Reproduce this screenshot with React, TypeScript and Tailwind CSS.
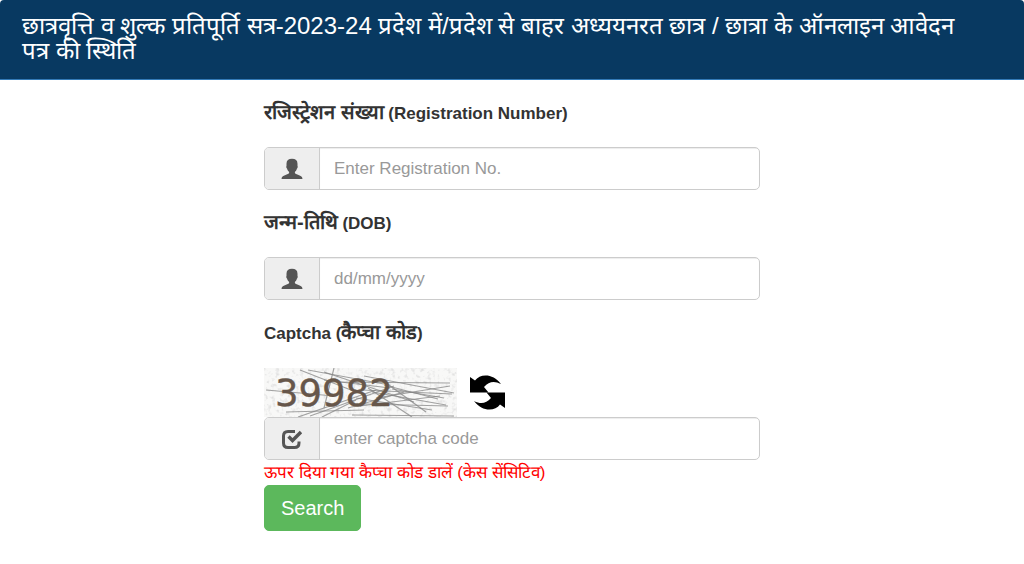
import type { ReactNode } from "react";

const captchaLines = [
  "M2 22L70 28", "M36 2L92 24", "M44 2L120 16", "M70 0L60 40", "M62 14L186 15",
  "M60 12L126 20", "M22 44L100 42", "M34 49L112 22", "M46 48L130 18", "M58 49L92 32",
  "M60 4L150 34", "M98 22L188 26", "M100 8L190 25", "M108 24L182 37", "M92 30L168 42",
  "M112 30L186 18", "M96 38L176 28", "M100 36L184 38", "M118 12L162 44", "M120 17L174 31",
  "M88 47L190 48", "M104 20L148 49", "M128 21L180 30", "M84 40L140 24",
];

function UserIcon() {
  return (
    <svg viewBox="0 0 22 22" className="size-[22px]" fill="#555" aria-hidden="true">
      <path d="M11 .8C7.400.8 5.500 2.600 5.500 5.800V8c-.5.5-.2 1.900.5 2.400.4 1.500 1.100 2.700 2.100 3.400v1.300c-.3.8-1.600 1.200-3 1.700C2.600 17.700.600 18.500.500 21h21c-.1-2.500-2.100-3.300-4.600-4.200-1.400-.5-2.700-.9-3-1.700v-1.300c1-.7 1.700-1.900 2.100-3.400.7-.5 1-1.900.5-2.400V5.800C16.500 2.600 14.600.8 11 .8z" />
    </svg>
  );
}

function CheckIcon() {
  return (
    <svg viewBox="0 0 22 22" className="size-[22px]" fill="none" stroke="#555" aria-hidden="true">
      <path d="M14 3.500H7Q2.500 3.500 2.500 8V15Q2.500 19.500 7 19.500H13.500Q18 19.500 18 15V13.500" strokeWidth="3" />
      <path d="M7.500 8.500L11.500 12.500L20 4" strokeWidth="3.400" />
    </svg>
  );
}

function Captcha() {
  return (
    <svg viewBox="0 0 193 49" className="h-[49px] w-[193px]" role="img" aria-label="39982">
      <defs>
        <filter id="grain" x="0" y="0" width="100%" height="100%">
          <feTurbulence type="fractalNoise" baseFrequency="0.25" numOctaves="2" seed="4" />
          <feColorMatrix values="0 0 0 0 .75  0 0 0 0 .75  0 0 0 0 .75  3 0 0 0 -1.500" />
        </filter>
      </defs>
      <rect width="193" height="49" fill="#f8f8f7" />
      <rect width="193" height="49" filter="url(#grain)" />
      {captchaLines.map((d) => (
        <path key={d} d={d} stroke="#858585" strokeWidth="1.200" opacity="0.750" />
      ))}
      <text x="11" y="38" fontFamily="'DejaVu Sans', sans-serif" fontSize="37" fill="#66564a" stroke="#66564a" strokeWidth="0.400">
        39982
      </text>
    </svg>
  );
}

function RefreshIcon() {
  return (
    <svg viewBox="0 0 35 35" className="size-[35px]" aria-hidden="true">
      <path d="M0 2L5 5.500C10-1.500 23-2 31 9C24 5.500 19 6.500 14 12L18.500 17.500H0z" />
      <path d="M35 33L30 29.500C25 36.500 12 37 4 26C11 29.500 16 28.500 21 23L16.500 17.500H35z" />
    </svg>
  );
}

function Field({ id, placeholder, icon }: { id: string; placeholder: string; icon: ReactNode }) {
  return (
    <div className="flex h-[43px] overflow-hidden rounded-[5px] border border-[#ccc] bg-white">
      <span className="flex w-[55px] shrink-0 items-center justify-center border-r border-[#ccc] bg-[#eee]">
        {icon}
      </span>
      <input
        id={id}
        type="text"
        placeholder={placeholder}
        className="min-w-0 flex-1 px-3.5 text-[17px] text-[#555] shadow-[inset_0_1px_1px_rgba(0,0,0,0.075)] outline-none placeholder:text-[#999]"
      />
    </div>
  );
}

const labelClass = "block text-[17px] leading-[23px] font-bold text-[#333]";
const hindiClass = "text-[20px] leading-none";

export default function App() {
  return (
    <div className="min-h-screen bg-white font-['Liberation_Sans',Arial,sans-serif]">
      <header className="rounded-t-[4px] border-b border-[#337ab7] bg-[#083961] pt-[13px] pr-10 pb-4 pl-[22px] text-white">
        <h1 className="text-[24px] leading-[25px]">
          छात्रवृत्ति व शुल्क प्रतिपूर्ति सत्र-2023-24 प्रदेश में/प्रदेश से बाहर अध्ययनरत छात्र / छात्रा के ऑनलाइन आवेदन पत्र की स्थिति
        </h1>
      </header>
      <main className="px-4 pt-[22px]">
        <form className="mx-auto max-w-[496px]" onSubmit={(e) => e.preventDefault()}>
          <div className="flex flex-col gap-[22px]">
            <label htmlFor="registration" className={labelClass}>
              <span className={hindiClass}>रजिस्ट्रेशन संख्या</span> (Registration Number)
            </label>
            <Field id="registration" placeholder="Enter Registration No." icon={<UserIcon />} />
            <label htmlFor="dob" className={labelClass}>
              <span className={hindiClass}>जन्म-तिथि</span> (DOB)
            </label>
            <Field id="dob" placeholder="dd/mm/yyyy" icon={<UserIcon />} />
            <label htmlFor="captcha" className={labelClass}>
              Captcha (<span className={hindiClass}>कैप्चा कोड</span>)
            </label>
            <div>
              <div className="flex items-center gap-[13px] pt-px">
                <Captcha />
                <button type="button" aria-label="Refresh captcha"><RefreshIcon /></button>
              </div>
              <Field id="captcha" placeholder="enter captcha code" icon={<CheckIcon />} />
              <p className="text-[17px] leading-[25px] text-[#f00]">ऊपर दिया गया कैप्चा कोड डालें (केस सेंसिटिव)</p>
              <button type="submit" className="rounded-[5px] border border-[#5cb85c] bg-[#5cb85c] px-4 py-2 text-xl leading-7 text-white">
                Search
              </button>
            </div>
          </div>
        </form>
      </main>
    </div>
  );
}
